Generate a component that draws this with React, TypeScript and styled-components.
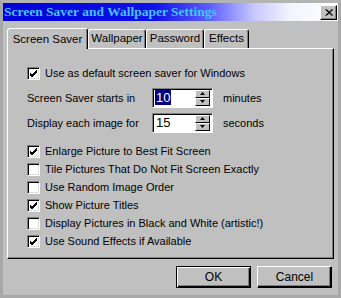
import styled, { createGlobalStyle } from 'styled-components'

const GlobalStyle = createGlobalStyle`
  body {
    margin: 0;
    background: #c0c0c0;
  }
`

const Window = styled.div`
  width: 341px;
  height: 298px;
  box-sizing: border-box;
  background: #c0c0c0;
  border: 3px solid #a8a8a8;
  border-top-color: #b4b4b4;
  font-family: 'Liberation Sans', Arial, sans-serif;
  font-size: 11px;
  color: #000;
  display: flex;
  flex-direction: column;
`

const TitleBar = styled.div`
  height: 18px;
  display: flex;
  align-items: center;
  justify-content: space-between;
  padding: 0 1px 0 1px;
  background: linear-gradient(90deg, #0000d8 0%, #1010e8 45%, #6060ff 62%, #c8c8ff 75%, #f4f4ff 86%, #ffffff 100%);
`

const Title = styled.span`
  font-family: 'Liberation Serif', 'Times New Roman', serif;
  font-weight: bold;
  font-size: 13.5px;
  color: #48c4ff;
`

const CloseButton = styled.div`
  width: 15px;
  height: 13px;
  background: #c0c0c0;
  border: 1px solid;
  border-color: #fff #000 #000 #fff;
  box-shadow: inset -1px -1px 0 #808080;
  display: flex;
  align-items: center;
  justify-content: center;
`

const Body = styled.div`
  flex: 1;
  padding: 6px 4px 0 4px;
  display: flex;
  flex-direction: column;
`

const TabRow = styled.div`
  display: flex;
  align-items: flex-end;
  height: 21px;
  position: relative;
  z-index: 1;
`

const Tab = styled.div<{ active?: boolean; w: number }>`
  width: ${({ w }) => w}px;
  box-sizing: border-box;
  height: ${({ active }) => (active ? 21 : 19)}px;
  margin-bottom: ${({ active }) => (active ? -1 : 0)}px;
  padding-top: ${({ active }) => (active ? 4 : 2)}px;
  text-align: center;
  font-size: 11.5px;
  background: #c0c0c0;
  border-top: 1px solid #fff;
  border-left: 1px solid #fff;
  border-right: 1px solid #000;
  border-radius: 3px 3px 0 0;
  box-shadow: inset -1px 0 0 #808080;
  white-space: nowrap;
`

const Panel = styled.div`
  width: 327px;
  height: 211px;
  box-sizing: border-box;
  border: 1px solid;
  border-color: #fff #000 #000 #fff;
  box-shadow: inset -1px -1px 0 #808080;
  padding: 15px 0 0 19px;
  display: flex;
  flex-direction: column;
`

const CheckRow = styled.label`
  display: flex;
  align-items: center;
  height: 18px;
  gap: 5px;
  font-size: 11px;
`

const Box = styled.span`
  width: 13px;
  height: 13px;
  box-sizing: border-box;
  background: #fff;
  border: 1px solid;
  border-color: #808080 #fff #fff #808080;
  box-shadow: inset 1px 1px 0 #000, inset -1px -1px 0 #dfdfdf;
  display: flex;
  align-items: center;
  justify-content: center;
  flex-shrink: 0;
`

const SpinRow = styled.div`
  display: flex;
  align-items: center;
  height: 21px;
  margin-top: 4px;
  font-size: 11px;
`

const SpinLabel = styled.span`
  width: 125px;
`

const Spinner = styled.div`
  width: 61px;
  height: 20px;
  box-sizing: border-box;
  background: #fff;
  border: 1px solid;
  border-color: #808080 #fff #fff #808080;
  box-shadow: inset 1px 1px 0 #000;
  display: flex;
  align-items: center;
  justify-content: space-between;
  padding: 1px 2px 1px 2px;
`

const Value = styled.span<{ selected?: boolean }>`
  font-size: 13px;
  line-height: 15px;
  padding: 0 1px;
  background: ${({ selected }) => (selected ? '#000080' : 'transparent')};
  color: ${({ selected }) => (selected ? '#fff' : '#000')};
`

const Arrows = styled.div`
  display: flex;
  flex-direction: column;
  width: 15px;
  height: 16px;
`

const ArrowBtn = styled.div`
  flex: 1;
  background: #c0c0c0;
  border: 1px solid;
  border-color: #fff #000 #000 #fff;
  box-sizing: border-box;
  display: flex;
  align-items: center;
  justify-content: center;
`

const Unit = styled.span`
  margin-left: 10px;
`

const Checks = styled.div`
  margin-top: 9px;
  display: flex;
  flex-direction: column;
`

const Footer = styled.div`
  display: flex;
  justify-content: flex-end;
  gap: 6px;
  margin-top: 7px;
  padding-right: 2px;
`

const Button = styled.div<{ isDefault?: boolean }>`
  width: 75px;
  height: 22px;
  box-sizing: border-box;
  background: #c0c0c0;
  border: 1px solid ${({ isDefault }) => (isDefault ? '#000' : '#fff')};
  box-shadow: ${({ isDefault }) =>
    isDefault
      ? 'inset 1px 1px 0 #fff, inset -1px -1px 0 #000, inset -2px -2px 0 #808080'
      : 'inset -1px -1px 0 #000, inset -2px -2px 0 #808080'};
  border-right-color: #000;
  border-bottom-color: #000;
  display: flex;
  align-items: center;
  justify-content: center;
  font-size: 12px;
`

const Check = () => (
  <svg width="9" height="9" viewBox="0 0 9 9">
    <path d="M1 4 L3 6 L8 1 M1 5 L3 7 L8 2 M1 6 L3 8 L8 3" stroke="#000" strokeWidth="1" fill="none" />
  </svg>
)

const Tri = ({ up }: { up?: boolean }) => (
  <svg width="5" height="3" viewBox="0 0 5 3">
    <path d={up ? 'M2.5 0 L5 3 L0 3 Z' : 'M0 0 L5 0 L2.5 3 Z'} fill="#000" />
  </svg>
)

const options = [
  { label: 'Enlarge Picture to Best Fit Screen', on: true },
  { label: 'Tile Pictures That Do Not Fit Screen Exactly', on: false },
  { label: 'Use Random Image Order', on: false },
  { label: 'Show Picture Titles', on: true },
  { label: 'Display Pictures in Black and White (artistic!)', on: false },
  { label: 'Use Sound Effects if Available', on: true },
]

const tabs = [
  { name: 'Screen Saver', w: 81 },
  { name: 'Wallpaper', w: 58 },
  { name: 'Password', w: 58 },
  { name: 'Effects', w: 45 },
]

function Spin({ value, selected, unit }: { value: string; selected?: boolean; unit: string }) {
  return (
    <>
      <Spinner>
        <Value selected={selected}>{value}</Value>
        <Arrows>
          <ArrowBtn>
            <Tri up />
          </ArrowBtn>
          <ArrowBtn>
            <Tri />
          </ArrowBtn>
        </Arrows>
      </Spinner>
      <Unit>{unit}</Unit>
    </>
  )
}

export default function App() {
  return (
    <>
      <GlobalStyle />
      <Window>
        <TitleBar>
          <Title>Screen Saver and Wallpaper Settings</Title>
          <CloseButton>
            <svg width="8" height="7" viewBox="0 0 8 7">
              <path d="M0.5 0.5 L7 6.5 M7 0.5 L0.5 6.5 M1.5 0.5 L8 6.5 M8 0.5 L1.5 6.5" stroke="#000" strokeWidth="1" />
            </svg>
          </CloseButton>
        </TitleBar>
        <Body>
          <TabRow>
            {tabs.map((t, i) => (
              <Tab key={t.name} active={i === 0} w={t.w}>
                {t.name}
              </Tab>
            ))}
          </TabRow>
          <Panel>
            <CheckRow>
              <Box>
                <Check />
              </Box>
              Use as default screen saver for Windows
            </CheckRow>
            <SpinRow style={{ marginTop: 5 }}>
              <SpinLabel>Screen Saver starts in</SpinLabel>
              <Spin value="10" selected unit="minutes" />
            </SpinRow>
            <SpinRow>
              <SpinLabel>Display each image for</SpinLabel>
              <Spin value="15" unit="seconds" />
            </SpinRow>
            <Checks>
              {options.map((o) => (
                <CheckRow key={o.label}>
                  <Box>{o.on && <Check />}</Box>
                  {o.label}
                </CheckRow>
              ))}
            </Checks>
          </Panel>
          <Footer>
            <Button isDefault>OK</Button>
            <Button>Cancel</Button>
          </Footer>
        </Body>
      </Window>
    </>
  )
}
